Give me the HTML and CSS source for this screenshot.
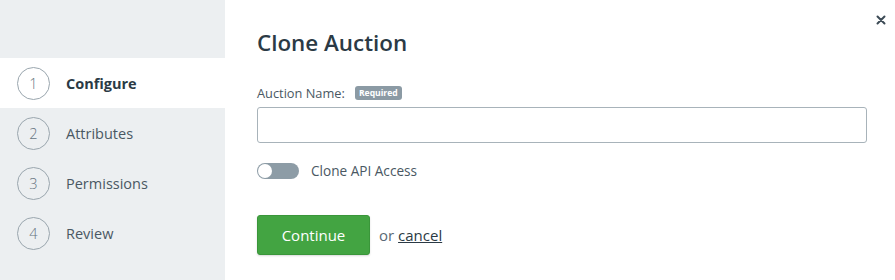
FILE: index.html
```html
<!DOCTYPE html>
<html>
<head>
<meta charset="utf-8">
<link rel="stylesheet" href="styles.css">
</head>
<body>
<div class="modal">
  <aside class="sidebar">
    <ol class="steps">
      <li class="step active"><span class="num">1</span><span class="label">Configure</span></li>
      <li class="step"><span class="num">2</span><span class="label">Attributes</span></li>
      <li class="step"><span class="num">3</span><span class="label">Permissions</span></li>
      <li class="step"><span class="num">4</span><span class="label">Review</span></li>
    </ol>
  </aside>
  <main class="content">
    <h1 class="title">Clone Auction</h1>
    <div class="field">
      <label class="field-label">Auction Name: <span class="badge">Required</span></label>
      <input class="input" type="text">
    </div>
    <div class="toggle-row">
      <span class="toggle"><span class="knob"></span></span>
      <span class="toggle-label">Clone API Access</span>
    </div>
    <div class="actions">
      <button class="btn">Continue</button>
      <span class="or">or <a href="#" class="cancel">cancel</a></span>
    </div>
  </main>
  <button class="close" aria-label="Close">
    <svg width="10" height="10" viewBox="0 0 10 10"><path d="M1.5 1.5 L8.5 8.5 M8.5 1.5 L1.5 8.5" stroke="#3d4b56" stroke-width="2" stroke-linecap="round"/></svg>
  </button>
</div>
</body>
</html>
```
FILE: styles.css
```css
* { box-sizing: border-box; }
html, body { margin: 0; padding: 0; }
body {
  font-family: "Open Sans", "Lato", sans-serif;
  color: #2b3a45;
  background: #fff;
  width: 895px;
  height: 280px;
  overflow: hidden;
}
.modal {
  position: relative;
  display: flex;
  height: 280px;
}
.sidebar {
  width: 225px;
  background: #eceff1;
  padding-top: 58px;
}
.steps {
  list-style: none;
  margin: 0;
  padding: 0;
}
.step {
  height: 50px;
  display: flex;
  align-items: center;
  padding-left: 17px;
}
.step.active { background: #fff; }
.num {
  width: 33px;
  height: 33px;
  border: 1px solid #9aa6ae;
  border-radius: 50%;
  display: flex;
  align-items: center;
  justify-content: center;
  font-size: 14.5px;
  color: #65747f;
  font-weight: 300;
}
.label {
  margin-left: 16px;
  font-size: 14.5px;
  color: #4a5863;
}
.step.active .label {
  font-weight: 700;
  color: #2b3a45;
}
.content {
  flex: 1;
  padding: 29px 28px 0 32px;
}
.title {
  margin: 0;
  font-size: 22.4px;
  font-weight: 600;
  color: #2b3a45;
  line-height: 28px;
}
.field { margin-top: 28px; }
.field-label {
  display: flex;
  align-items: center;
  font-size: 12.8px;
  color: #4a5863;
  height: 16px;
}
.badge {
  margin-left: 10px;
  background: #8b9aa4;
  color: #fff;
  font-size: 8.6px;
  font-weight: 700;
  padding: 1px 4px;
  border-radius: 3px;
  line-height: 12px;
}
.input {
  display: block;
  margin-top: 6px;
  width: 610px;
  height: 36px;
  border: 1px solid #a8b3ba;
  border-radius: 3px;
  background: #fff;
}
.toggle-row {
  display: flex;
  align-items: center;
  margin-top: 18px;
}
.toggle {
  width: 42px;
  height: 16px;
  border-radius: 8px;
  background: #8d9ca6;
  position: relative;
}
.knob {
  position: absolute;
  left: 1px;
  top: 1px;
  width: 14px;
  height: 14px;
  border-radius: 50%;
  background: #fff;
}
.toggle-label {
  margin-left: 12px;
  font-size: 13.6px;
  color: #4a5863;
}
.actions {
  display: flex;
  align-items: center;
  margin-top: 35px;
}
.btn {
  width: 113px;
  height: 40px;
  background: #43a442;
  border: 1px solid #3a963a;
  border-radius: 3px;
  color: #fff;
  font-family: inherit;
  font-size: 15px;
  box-shadow: 0 1px 2px rgba(0,0,0,0.15);
}
.or {
  margin-left: 9px;
  font-size: 15px;
  color: #5a6a75;
}
.cancel { color: #2b3a45; }
.close {
  position: absolute;
  right: 9px;
  top: 13px;
  background: none;
  border: 0;
  padding: 0;
  width: 10px;
  height: 10px;
}
```
